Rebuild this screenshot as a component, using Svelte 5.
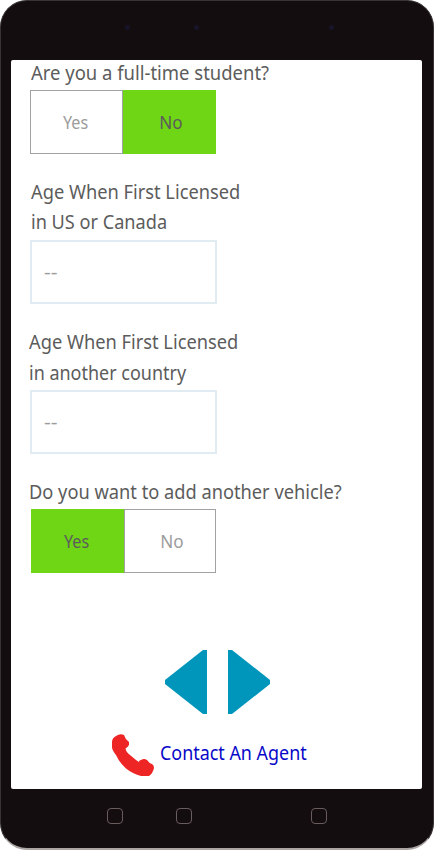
<script>
  // Condenses a line of text horizontally to a given width.
  function fit(node, width) {
    node.style.transform = `scaleX(${width / node.offsetWidth})`;
  }
  const keys = [0, 1, 2];
</script>

{#snippet line(text, width)}
  <span class="line"><span class="fit" use:fit={width}>{text}</span></span>
{/snippet}

<div class="phone">
  <header>
    <i></i><i></i><i></i>
  </header>

  <main>
    <div class="label student">{@render line('Are you a full-time student?', 238)}</div>
    <div class="toggle first">
      <button><span class="fit mid" use:fit={25}>Yes</span></button>
      <button class="on no"><span class="fit mid" use:fit={23.5}>No</span></button>
    </div>

    <div class="label us">
      {@render line('Age When First Licensed', 209.5)}
      {@render line('in US or Canada', 136.5)}
    </div>
    <div class="field"><span class="fit" use:fit={14}>--</span></div>

    <div class="label other">
      {@render line('Age When First Licensed', 209.5)}
      {@render line('in another country', 157)}
    </div>
    <div class="field"><span class="fit" use:fit={14}>--</span></div>

    <div class="label vehicle">{@render line('Do you want to add another vehicle?', 313)}</div>
    <div class="toggle second">
      <button class="on"><span class="fit mid" use:fit={25}>Yes</span></button>
      <button class="no"><span class="fit mid" use:fit={23.5}>No</span></button>
    </div>

    <nav>
      <svg width="42" height="64" viewBox="0 0 42 64"><path d="M38 0H42V64H38L0 34V30Z" fill="#0095bb" /></svg>
      <svg width="42" height="64" viewBox="0 0 42 64"><path d="M4 0H0V64H4L42 34V30Z" fill="#0095bb" /></svg>
    </nav>

    <div class="contact">
      <svg width="42" height="42" viewBox="0 0 42 42">
        <path d="M0 8Q0 4 4 2Q8-1 12 1Q13 5 17 8V11Q15 14 13.500 14.500Q14 18 18 21L24 26L27 28Q27 26 29 26Q32 24 35 26Q37 29 40 30Q42 31 42 34Q41 39 37 42H29Q21 40 14 34.500Q7 28 4 21Q0 16 0 13Z" fill="#ee2525" />
      </svg>
      <span class="fit" use:fit={147}>Contact An Agent</span>
    </div>
  </main>

  <footer>
    {#each keys as key (key)}<b></b>{/each}
  </footer>
</div>

<style>
  :global(body) {
    margin: 0;
    background: #fff;
  }
  .phone {
    box-sizing: border-box;
    width: 434px;
    height: 850px;
    display: flex;
    flex-direction: column;
    background: #130d0f;
    border: 1px solid #393334;
    border-bottom: 2px solid #aaa5a3;
    border-radius: 27px;
    padding: 0 11px 0 10px;
    font-family: "Noto Sans", "Open Sans", sans-serif;
    font-size: 19px;
    color: #5c5c5c;
    overflow: hidden;
  }
  header {
    height: 59px;
    flex: none;
    display: flex;
    padding-left: 114px;
  }
  header i {
    width: 5px;
    height: 5px;
    margin-top: 24px;
    border-radius: 50%;
    background: #17142a;
    margin-right: 64px;
  }
  header i:nth-child(2) {
    margin-right: 130px;
  }
  main {
    box-sizing: border-box;
    height: 729px;
    flex: none;
    background: #fff;
    border-radius: 2px;
    padding-left: 19px;
  }
  .line {
    display: block;
    white-space: nowrap;
  }
  .fit {
    display: inline-block;
    white-space: nowrap;
    transform-origin: 0 50%;
  }
  .mid {
    transform-origin: 50% 50%;
  }
  .label {
    line-height: 30px;
  }
  .student {
    line-height: 26px;
    height: 30px;
    padding-left: 1px;
  }
  .us {
    padding: 23px 0 3px 1px;
  }
  .other {
    line-height: 31px;
    padding: 23px 0 1px;
    margin-left: -1px;
  }
  .vehicle {
    padding: 23px 0 2px;
    margin-left: -1px;
  }
  .toggle {
    display: flex;
    width: 186px;
    height: 64px;
  }
  .toggle button {
    box-sizing: border-box;
    width: 93px;
    height: 64px;
    padding: 0 2px 0 0;
    border: 1px solid #a2a2a2;
    background: #fff;
    font: 17.5px "Noto Sans", "Open Sans", sans-serif;
    color: #9c9c9c;
  }
  .toggle .no {
    padding: 0 0 0 3px;
  }
  .toggle .on {
    background: #6fd616;
    border-color: #6fd616;
    color: #5c5c5c;
  }
  .second {
    width: 185px;
    margin-left: 1px;
  }
  .second button:last-child {
    width: 92px;
    border-color: #a2a2a2;
  }
  .field {
    box-sizing: border-box;
    width: 187px;
    height: 64px;
    border: 2px solid #e0ecf2;
    padding-left: 12px;
    line-height: 60px;
    font-size: 18px;
    color: #9c9c9c;
  }
  nav {
    display: flex;
    gap: 21px;
    padding: 77px 0 0 135px;
  }
  .contact {
    display: flex;
    align-items: center;
    margin: 20px 0 0 82px;
    font-size: 19px;
    line-height: 38px;
    color: #0808c8;
    gap: 6px;
    height: 42px;
  }
  .contact .fit {
    height: 42px;
  }
  footer {
    display: flex;
    padding: 19px 0 0 96px;
  }
  footer b {
    box-sizing: border-box;
    width: 16px;
    height: 16px;
    border: 1px solid #695c5d;
    border-radius: 4px;
    margin-right: 53px;
  }
  footer b:nth-child(2) {
    margin-right: 119px;
  }
</style>
